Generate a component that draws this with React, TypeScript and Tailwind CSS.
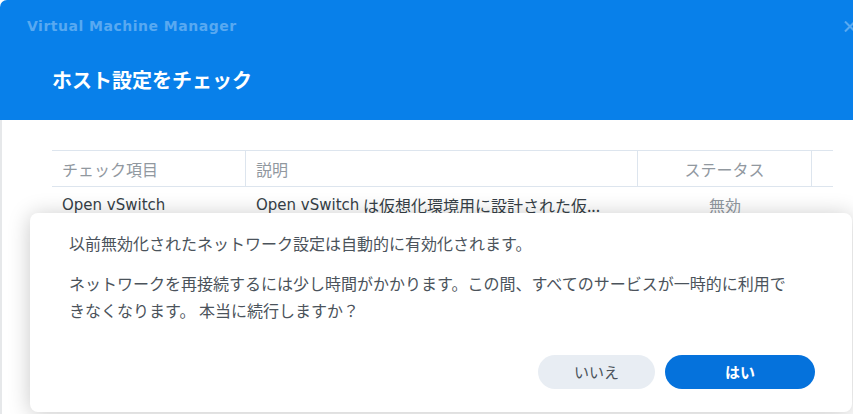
import React from "react";

const jp = { fontFamily: '"Noto Sans CJK JP", "Noto Sans", sans-serif' };
const lat = { fontFamily: '"DejaVu Sans", "Noto Sans CJK JP", sans-serif' };

export default function App() {
  return (
    <div className="relative w-[853px] h-[414px] overflow-hidden bg-white" style={jp}>
      {/* window */}
      <div className="flex flex-col h-full">
        <div className="h-[120px] bg-[#0880ea] rounded-tl-[7px] flex flex-col relative">
          <div className="flex items-center h-[50px] pl-[27px] pt-[3px]">
            <span className="text-[14px] font-bold text-[#58a9f1] tracking-[0.5px]" style={{ fontFamily: '"DejaVu Sans", sans-serif' }}>
              Virtual Machine Manager
            </span>
          </div>
          <div className="absolute right-[-4px] top-[21px]">
            <svg width="14" height="11" viewBox="0 0 14 11">
              <path d="M2 0.5 L12 10.5 M12 0.5 L2 10.5" stroke="#58a9f1" strokeWidth="2" />
            </svg>
          </div>
          <div className="pl-[52px] mt-[15px] text-[20px] font-bold text-white leading-[30px]">ホスト設定をチェック</div>
        </div>
        <div className="flex-1 border-l-2 border-[#e6e8ea] pl-[50px] pr-[20px] pt-[30px]">
          <div className="w-[781px] border-t border-[#dde5ee]">
            <div className="flex h-[36px] border-b border-[#dde5ee] text-[16px] text-[#91989f]">
              <div className="w-[194px] pl-[10px] flex items-center border-r border-[#dde5ee]">チェック項目</div>
              <div className="w-[392px] pl-[10px] flex items-center border-r border-[#dde5ee]">説明</div>
              <div className="w-[174px] flex items-center justify-center border-r border-[#dde5ee]">ステータス</div>
              <div className="flex-1" />
            </div>
            <div className="flex h-[36px] text-[16px] text-[#363f47]">
              <div className="w-[194px] pl-[10px] flex items-center">
                <span className="text-[15px]" style={lat}>Open vSwitch</span>
              </div>
              <div className="w-[392px] pl-[10px] flex items-center whitespace-nowrap">
                <span className="text-[15px]" style={lat}>Open vSwitch</span>
                <span>&nbsp;は仮想化環境用に設計された仮...</span>
              </div>
              <div className="w-[174px] flex items-center justify-center text-[#91989f]">無効</div>
            </div>
          </div>
        </div>
      </div>

      {/* confirm dialog */}
      <div className="absolute left-[30px] top-[213px] w-[822px] h-[199px] bg-white rounded-[8px] shadow-[0_2px_22px_rgba(0,0,0,0.22)] flex flex-col pl-[39px] pr-[37px] pt-[17px] pb-[23px]">
        <div className="text-[16px] leading-[27px] text-[#4b535b]">
          <div>以前無効化されたネットワーク設定は自動的に有効化されます。</div>
          <div className="mt-[13px]">
            ネットワークを再接続するには少し時間がかかります。この間、すべてのサービスが一時的に利用で
            <br />
            きなくなります。 本当に続行しますか？
          </div>
        </div>
        <div className="flex-1" />
        <div className="flex justify-end gap-[10px]">
          <button className="w-[117px] h-[34px] rounded-full bg-[#e8edf3] text-[15px] text-[#4b535b]" style={jp}>
            いいえ
          </button>
          <button className="w-[150px] h-[34px] rounded-full bg-[#0572dc] text-[15px] font-bold text-white" style={jp}>
            はい
          </button>
        </div>
      </div>
    </div>
  );
}
